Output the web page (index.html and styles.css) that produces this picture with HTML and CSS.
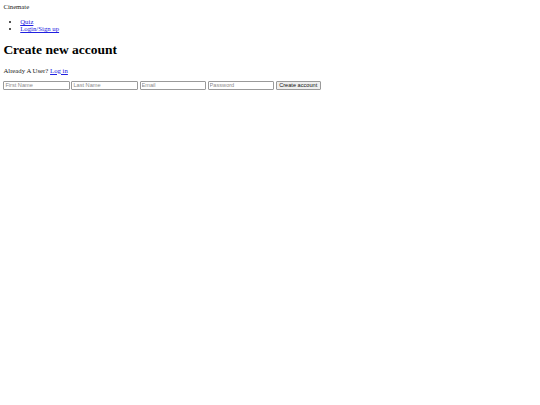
FILE: index.html
```html
<!DOCTYPE html>
<html>
<head>
<meta charset="utf-8">
<title>Cinemate</title>
<link rel="stylesheet" href="styles.css">
</head>
<body>
<nav class="nav">
  <div class="brand">Cinemate</div>
  <ul class="links">
    <li><a href="#">Quiz</a></li>
    <li><a href="#">Login/Sign up</a></li>
  </ul>
</nav>
<h1 class="title">Create new account</h1>
<p class="note">Already A User? <a href="#">Log in</a></p>
<form class="form">
  <input class="field" type="text" placeholder="First Name">
  <input class="field" type="text" placeholder="Last Name">
  <input class="field" type="email" placeholder="Email">
  <input class="field" type="password" placeholder="Password">
  <button class="btn" type="button">Create account</button>
</form>
</body>
</html>
```
FILE: styles.css
```css
html { background: #fff; }
body {
  margin: 3.375px;
  font-family: "Liberation Serif", "Times New Roman", serif;
  font-size: 6.75px;
  line-height: 7.6px;
  color: #1a1a1a;
}
a { color: #2020e0; }
.links {
  margin: 6.75px 0;
  padding-left: 16.875px;
}
.title {
  font-size: 13.5px;
  line-height: 15.6px;
  margin: 9.045px 0;
  font-weight: bold;
  color: #000;
}
.note { margin: 6.75px 0; }
.form { margin: 0; line-height: 8.86px; }
.field {
  font-family: "Liberation Sans", Arial, sans-serif;
  font-size: 5.625px;
  box-sizing: border-box;
  width: 66.4px;
  height: 8.86px;
  padding: 0 1px;
  border: 0.5px solid #9a9a9a;
  border-radius: 1px;
  margin: 0;
  vertical-align: top;
}
.field::placeholder { color: #8a8a8a; }
.btn {
  font-family: "Liberation Sans", Arial, sans-serif;
  font-size: 5.625px;
  box-sizing: border-box;
  height: 8.86px;
  padding: 0 2.5px;
  border: 0.5px solid #9a9a9a;
  border-radius: 1px;
  background: #efefef;
  color: #111;
  margin: 0;
  vertical-align: top;
}
```
